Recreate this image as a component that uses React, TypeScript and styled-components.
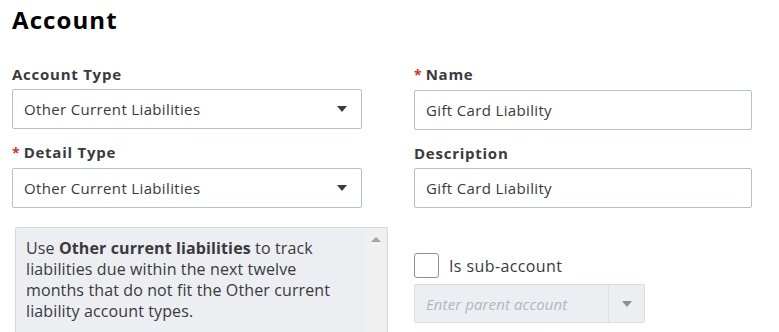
import React from "react";
import styled, { createGlobalStyle } from "styled-components";

const Global = createGlobalStyle`
  html, body { margin: 0; padding: 0; background: #ffffff; }
  body { font-family: "Open Sans", "Noto Sans", sans-serif; color: #393a3d; }
  * { box-sizing: border-box; }
`;

const Page = styled.div`
  width: 779px;
  height: 332px;
  overflow: hidden;
  padding: 4px 0 0 12px;
`;

const Title = styled.h1`
  margin: 0 0 0 0;
  font-size: 24px;
  line-height: 32px;
  font-weight: 700;
  letter-spacing: 1.1px;
  color: #000000;
`;

const Grid = styled.div`
  display: grid;
  grid-template-columns: 350px 338px;
  column-gap: 52px;
  margin-top: 28px;
`;

const Column = styled.div`
  display: flex;
  flex-direction: column;
`;

const Label = styled.div`
  display: flex;
  align-items: baseline;
  font-size: 15px;
  line-height: 20px;
  font-weight: 700;
  letter-spacing: 0.75px;
  color: #393a3d;
  margin-bottom: 5px;
  margin-left: 0;
`;

const Star = styled.span`
  color: #e0301e;
  font-size: 14px;
  letter-spacing: 0;
  margin-right: 4px;
`;

const Field = styled.div<{ $gap?: number }>`
  height: 40px;
  border: 1px solid #babec5;
  border-radius: 2px;
  display: flex;
  align-items: center;
  padding: 0 14px 0 11px;
  font-size: 15px;
  letter-spacing: 0.35px;
  color: #393a3d;
  background: #ffffff;
  margin-bottom: ${(p) => p.$gap ?? 13}px;
`;

const FieldText = styled.span`
  flex: 1;
`;

const Caret = styled.span<{ $color?: string }>`
  width: 0;
  height: 0;
  border-left: 5px solid transparent;
  border-right: 5px solid transparent;
  border-top: 6px solid ${(p) => p.$color ?? "#393a3d"};
`;

const HelpBox = styled.div`
  margin-left: 3px;
  width: 373px;
  height: 120px;
  border: 1px solid #d4d7dc;
  border-bottom: none;
  border-radius: 2px 2px 0 0;
  background: #eceef1;
  display: flex;
`;

const HelpText = styled.p`
  flex: 1;
  margin: 0;
  padding: 10px 14px 0 10px;
  font-size: 16px;
  line-height: 21px;
  letter-spacing: 0.12px;
  color: #393a3d;
  b { font-weight: 700; color: #393a3d; }
`;

const ScrollTrack = styled.div`
  width: 22px;
  background: #f0f0f1;
  display: flex;
  justify-content: center;
  padding-top: 9px;
`;

const ScrollArrow = styled.span`
  width: 0;
  height: 0;
  border-left: 5px solid transparent;
  border-right: 5px solid transparent;
  border-bottom: 5px solid #a3a3a3;
`;

const CheckRow = styled.label`
  display: flex;
  align-items: center;
  gap: 10px;
  margin-top: 45px;
  margin-bottom: 6px;
  font-size: 16px;
  letter-spacing: 0.4px;
  color: #393a3d;
`;

const Box = styled.span`
  width: 25px;
  height: 25px;
  border: 1px solid #8d9096;
  border-radius: 3px;
  background: #fff;
`;

const ParentSelect = styled.div`
  width: 231px;
  height: 39px;
  border: 1px solid #dcdee2;
  border-radius: 2px;
  background: #eceef1;
  display: flex;
`;

const ParentInput = styled.div`
  flex: 1;
  display: flex;
  align-items: center;
  padding-left: 11px;
  font-size: 15px;
  font-style: italic;
  letter-spacing: 0.1px;
  color: #b3b6bc;
  border-right: 1px solid #dcdee2;
`;

const ParentBtn = styled.div`
  width: 35px;
  display: flex;
  align-items: center;
  justify-content: center;
`;

export default function App() {
  return (
    <>
      <Global />
      <Page>
        <Title>Account</Title>
        <Grid>
          <Column>
            <Label>Account Type</Label>
            <Field>
              <FieldText>Other Current Liabilities</FieldText>
              <Caret />
            </Field>
            <Label>
              <Star>*</Star>Detail Type
            </Label>
            <Field $gap={19}>
              <FieldText>Other Current Liabilities</FieldText>
              <Caret />
            </Field>
            <HelpBox>
              <HelpText>
                Use <b>Other current liabilities</b> to track liabilities due
                within the next twelve months that do not fit the Other current
                liability account types.
              </HelpText>
              <ScrollTrack>
                <ScrollArrow />
              </ScrollTrack>
            </HelpBox>
          </Column>
          <Column>
            <Label>
              <Star>*</Star>Name
            </Label>
            <Field>
              <FieldText>Gift Card Liability</FieldText>
            </Field>
            <Label>Description</Label>
            <Field $gap={0}>
              <FieldText>Gift Card Liability</FieldText>
            </Field>
            <CheckRow>
              <Box />
              Is sub-account
            </CheckRow>
            <ParentSelect>
              <ParentInput>Enter parent account</ParentInput>
              <ParentBtn>
                <Caret $color="#8d9096" />
              </ParentBtn>
            </ParentSelect>
          </Column>
        </Grid>
      </Page>
    </>
  );
}
